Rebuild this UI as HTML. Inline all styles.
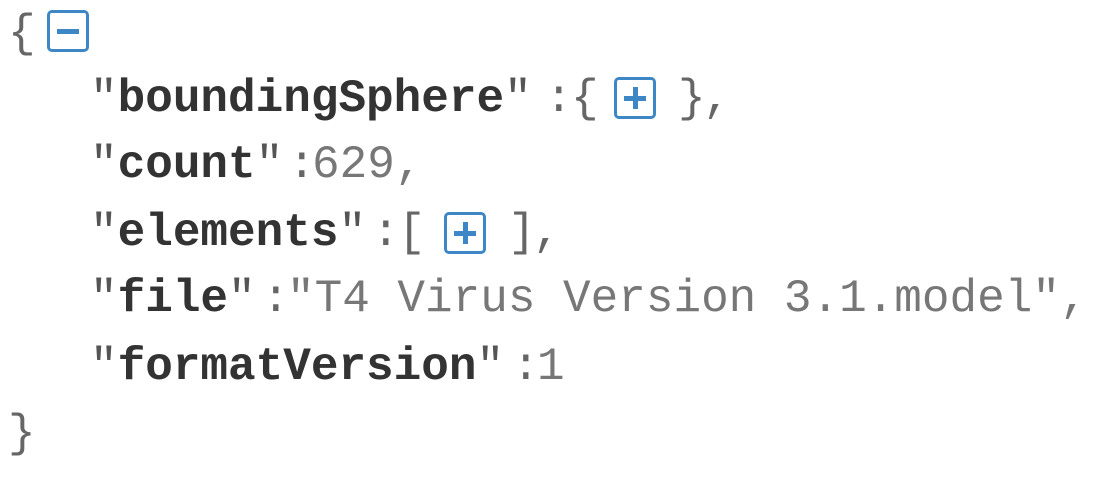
<!DOCTYPE html>
<html><head><meta charset="utf-8"><style>
body{margin:0;width:1111px;height:477px;background:#fff;overflow:hidden;position:relative;font-family:"Liberation Mono",monospace;font-size:46px;}
.t{position:absolute;line-height:67px;white-space:pre;color:#666;}
.k{color:#333;font-weight:bold;}
.q{color:#555;}
.v{color:#777;}
.ic{position:absolute;width:36px;height:36px;border:3.5px solid #3e87c6;border-radius:5px;}
.ic .h{position:absolute;left:7px;top:15.5px;width:22px;height:5px;background:#3e87c6;}
.ic .vv{position:absolute;left:15.5px;top:7px;width:5px;height:22px;background:#3e87c6;}
</style></head><body>
<div class="t" style="left:8px;top:1px">{</div>
<div class="ic" style="left:47px;top:10px"><div class="h"></div></div>

<div class="t" style="left:90px;top:66px"><span class="q">"</span><span class="k">boundingSphere</span><span class="q">"</span></div>
<div class="t" style="left:545px;top:66px">:</div>
<div class="t" style="left:571px;top:66px">{</div>
<div class="ic" style="left:614px;top:77px"><div class="h"></div><div class="vv"></div></div>
<div class="t" style="left:678px;top:66px">}</div>
<div class="t" style="left:703px;top:66px">,</div>

<div class="t" style="left:90px;top:132px"><span class="q">"</span><span class="k">count</span><span class="q">"</span></div>
<div class="t" style="left:288px;top:132px">:</div>
<div class="t v" style="left:312px;top:132px">629,</div>

<div class="t" style="left:90px;top:200px"><span class="q">"</span><span class="k">elements</span><span class="q">"</span></div>
<div class="t" style="left:372px;top:200px">:</div>
<div class="t" style="left:398px;top:200px">[</div>
<div class="ic" style="left:444px;top:212px"><div class="h"></div><div class="vv"></div></div>
<div class="t" style="left:508px;top:200px">]</div>
<div class="t" style="left:533px;top:200px">,</div>

<div class="t" style="left:90px;top:266px"><span class="q">"</span><span class="k">file</span><span class="q">"</span></div>
<div class="t" style="left:262px;top:266px">:</div>
<div class="t v" style="left:287px;top:266px">"T4 Virus Version 3.1.model",</div>

<div class="t" style="left:90px;top:334px"><span class="q">"</span><span class="k">formatVersion</span><span class="q">"</span></div>
<div class="t" style="left:512px;top:334px">:</div>
<div class="t v" style="left:537px;top:334px">1</div>

<div class="t" style="left:8px;top:401px">}</div>
</body></html>
